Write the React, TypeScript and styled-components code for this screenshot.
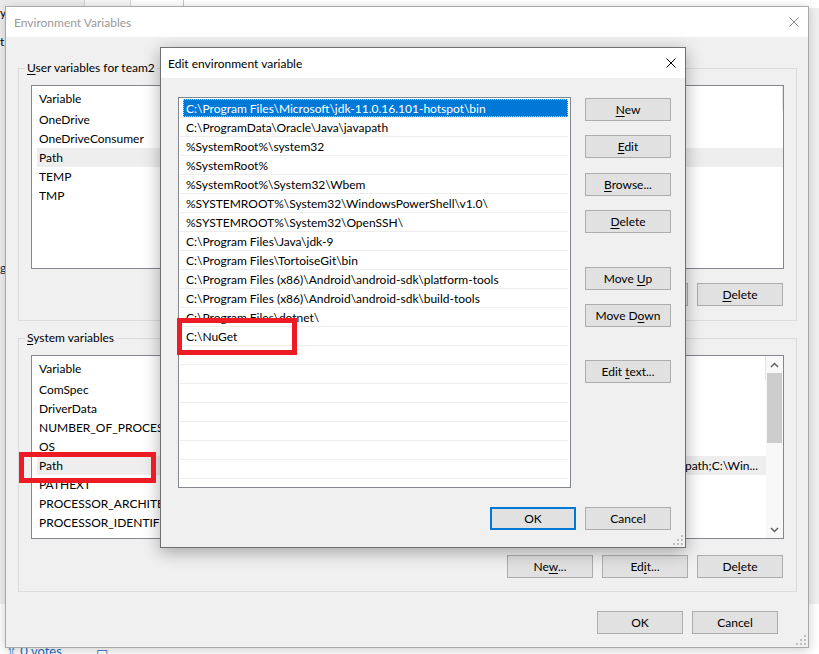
import React from "react";
import styled, { createGlobalStyle } from "styled-components";

const FONT = `"Segoe UI", Lato, "Noto Sans", "Liberation Sans", Arial, sans-serif`;

const GlobalStyle = createGlobalStyle`
  html, body { margin: 0; padding: 0; background: #f0f0f0; }
  body { font-family: ${FONT}; font-size: 12px; color: #000; }
  * { box-sizing: border-box; }
  u { text-decoration-thickness: 1px; text-underline-offset: 2px; }
`;

/* ---------- desktop & background page ---------- */

const Desktop = styled.div`
  position: relative;
  width: 819px;
  height: 654px;
  overflow: hidden;
  background: #f0f0f0;
`;

const TopStrip = styled.div`
  position: absolute;
  left: 0;
  top: 0;
  width: 819px;
  height: 8px;
  background: linear-gradient(
    to right,
    #ececec 0 84px,
    #d0d0d0 84px 85px,
    #f6f6f6 85px 130px,
    #d6d6d6 130px 131px,
    #ffffff 131px 183px,
    #c4c4c4 183px 184px,
    #ffffff 184px
  );
`;

const BottomStrip = styled.div`
  position: absolute;
  left: 0;
  top: 604px;
  width: 819px;
  height: 50px;
  background: #ffffff;
`;

const EdgeGlyph = styled.span<{ $top: number; $color?: string }>`
  position: absolute;
  left: 0;
  top: ${(p) => p.$top}px;
  font-size: 12px;
  line-height: 16px;
  color: ${(p) => p.$color ?? "#000"};
`;

const VotesLine = styled.div`
  position: absolute;
  left: 6px;
  top: 643px;
  display: flex;
  align-items: center;
  gap: 34px;
  font-size: 13px;
  line-height: 16px;
  color: #1a6fc4;
`;

/* ---------- windows ---------- */

const Window = styled.div<{ $x: number; $y: number; $w: number; $h: number; $active?: boolean }>`
  position: absolute;
  left: ${(p) => p.$x}px;
  top: ${(p) => p.$y}px;
  width: ${(p) => p.$w}px;
  height: ${(p) => p.$h}px;
  display: flex;
  flex-direction: column;
  background: #f0f0f0;
  border: 1px solid ${(p) => (p.$active ? "#707070" : "#a9a9a9")};
  box-shadow: ${(p) =>
    p.$active ? "0 4px 16px rgba(0,0,0,0.32)" : "0 2px 10px rgba(0,0,0,0.2)"};
`;

const TitleBar = styled.div<{ $active?: boolean }>`
  flex: none;
  height: 30px;
  display: flex;
  align-items: center;
  justify-content: space-between;
  padding: 0 9px 0 ${(p) => (p.$active ? "7px" : "8px")};
  background: #ffffff;
  color: ${(p) => (p.$active ? "#000" : "#9a9a9a")};
  font-size: 12px;
`;

const CloseIcon = ({ color }: { color: string }) => (
  <svg width="10" height="10" viewBox="0 0 10 10">
    <path d="M0.5 0.5 L9.5 9.5 M9.5 0.5 L0.5 9.5" stroke={color} strokeWidth="1" fill="none" />
  </svg>
);

const Grip = styled.div`
  position: absolute;
  right: 2px;
  bottom: 2px;
  width: 10px;
  height: 10px;
  display: flex;
`;

const GripIcon = () => (
  <svg width="10" height="10" viewBox="0 0 10 10">
    {[
      [8, 0],
      [4, 4],
      [8, 4],
      [0, 8],
      [4, 8],
      [8, 8],
    ].map(([x, y]) => (
      <rect key={`${x}-${y}`} x={x} y={y} width="2" height="2" fill="#bfbfbf" />
    ))}
  </svg>
);

/* ---------- buttons ---------- */

const Button = styled.button<{ $default?: boolean; $mt?: number }>`
  display: block;
  width: 86px;
  height: 23px;
  flex: none;
  margin: ${(p) => p.$mt ?? 0}px 0 0 0;
  padding: 0;
  font-family: ${FONT};
  font-size: 12px;
  line-height: 16px;
  text-align: center;
  white-space: pre;
  color: #000;
  background: #e1e1e1;
  border: ${(p) => (p.$default ? "2px solid #0078d7" : "1px solid #adadad")};
`;

const ButtonRow = styled.div<{ $mt?: number; $pr?: number }>`
  display: flex;
  justify-content: flex-end;
  gap: 9px;
  margin-top: ${(p) => p.$mt ?? 0}px;
  padding-right: ${(p) => p.$pr ?? 0}px;
`;

/* ---------- outer dialog ---------- */

const OuterBody = styled.div`
  flex: 1;
  display: flex;
  flex-direction: column;
  padding: 23px 11px 0 12px;
`;

const Group = styled.fieldset<{ $gap: number; $pb: number; $mt?: number }>`
  margin: ${(p) => p.$mt ?? 0}px 0 0 0;
  min-width: 0;
  padding: 9px 12px ${(p) => p.$pb}px 12px;
  border: 1px solid #dcdcdc;
  display: flex;
  flex-direction: column;
  gap: ${(p) => p.$gap}px;
`;

const Legend = styled.legend`
  margin-left: -6px;
  padding: 0 2px;
  font-size: 12px;
  line-height: 16px;
  color: #000;
`;

const ListView = styled.div`
  height: 184px;
  flex: none;
  display: flex;
  border: 1px solid #828790;
  background: #ffffff;
  overflow: hidden;
`;

const ListMain = styled.div`
  flex: 1;
  min-width: 0;
  display: flex;
  flex-direction: column;
`;

const ListHeader = styled.div`
  flex: none;
  height: 24px;
  display: flex;
  align-items: center;
  padding-left: 7px;
  border-right: 1px solid #e5e5e5;
`;

const VarRow = styled.div<{ $selected?: boolean }>`
  flex: none;
  height: 19px;
  margin-left: 5px;
  display: flex;
  align-items: center;
  background: ${(p) => (p.$selected ? "#eeeeee" : "transparent")};
`;

const NameCell = styled.span`
  width: 170px;
  flex: none;
  padding-left: 2px;
  white-space: nowrap;
  overflow: hidden;
`;

const ValueCell = styled.span`
  flex: 1;
  min-width: 0;
  display: flex;
  justify-content: flex-end;
  padding-right: 8px;
  white-space: nowrap;
  overflow: hidden;
`;

const VScroll = styled.div`
  width: 17px;
  flex: none;
  display: flex;
  flex-direction: column;
  background: #f8f8f8;
`;

const ScrollArrow = styled.div`
  height: 17px;
  flex: none;
  display: flex;
  align-items: center;
  justify-content: center;
`;

const ScrollThumb = styled.div`
  flex: none;
  height: 70px;
  margin: 0 1px;
  background: #cdcdcd;
`;

const ScrollTrack = styled.div`
  flex: 1;
`;

const Chevron = ({ up }: { up?: boolean }) => (
  <svg width="9" height="6" viewBox="0 0 9 6">
    <path
      d={up ? "M1 5 L4.5 1.5 L8 5" : "M1 1 L4.5 4.5 L8 1"}
      stroke="#606060"
      strokeWidth="1.5"
      fill="none"
    />
  </svg>
);

/* ---------- edit dialog ---------- */

const DialogBody = styled.div`
  flex: 1;
  display: flex;
  flex-direction: column;
  padding: 19px 14px 17px 17px;
`;

const DialogMain = styled.div`
  display: flex;
  gap: 14px;
`;

const PathList = styled.div`
  width: 393px;
  height: 391px;
  flex: none;
  border: 1px solid #828790;
  background: #ffffff;
  padding: 1px 2px 0 1px;
  overflow: hidden;
`;

const PathRow = styled.div`
  height: 19px;
  display: flex;
  padding-left: 3px;
  border-bottom: 1px solid #ededed;
`;

const PathText = styled.div<{ $selected?: boolean }>`
  flex: 1;
  display: flex;
  align-items: center;
  padding-left: 3px;
  white-space: nowrap;
  overflow: hidden;
  background: ${(p) => (p.$selected ? "#0078d7" : "transparent")};
  color: ${(p) => (p.$selected ? "#ffffff" : "#000")};
  outline: ${(p) => (p.$selected ? "1px dotted rgba(255,255,255,0.75)" : "none")};
  outline-offset: -1px;
`;

const SideButtons = styled.div`
  width: 86px;
  flex: none;
  display: flex;
  flex-direction: column;
`;

const Highlight = styled.div<{ $x: number; $y: number; $w: number; $h: number }>`
  position: absolute;
  left: ${(p) => p.$x}px;
  top: ${(p) => p.$y}px;
  width: ${(p) => p.$w}px;
  height: ${(p) => p.$h}px;
  border: 5px solid #ed1c24;
  pointer-events: none;
`;

/* ---------- data ---------- */

type Var = { name: string; value?: string; selected?: boolean };

const userVars: Var[] = [
  { name: "OneDrive" },
  { name: "OneDriveConsumer" },
  { name: "Path", selected: true },
  { name: "TEMP" },
  { name: "TMP" },
];

const systemVars: Var[] = [
  { name: "ComSpec" },
  { name: "DriverData" },
  { name: "NUMBER_OF_PROCESSORS" },
  { name: "OS" },
  {
    name: "Path",
    value:
      "C:\\Program Files\\Microsoft\\jdk-11.0.16.101-hotspot\\bin;C:\\ProgramData\\Oracle\\Java\\javapath;C:\\Win...",
    selected: true,
  },
  { name: "PATHEXT" },
  { name: "PROCESSOR_ARCHITECTURE" },
  { name: "PROCESSOR_IDENTIFIER" },
];

const paths = [
  "C:\\Program Files\\Microsoft\\jdk-11.0.16.101-hotspot\\bin",
  "C:\\ProgramData\\Oracle\\Java\\javapath",
  "%SystemRoot%\\system32",
  "%SystemRoot%",
  "%SystemRoot%\\System32\\Wbem",
  "%SYSTEMROOT%\\System32\\WindowsPowerShell\\v1.0\\",
  "%SYSTEMROOT%\\System32\\OpenSSH\\",
  "C:\\Program Files\\Java\\jdk-9",
  "C:\\Program Files\\TortoiseGit\\bin",
  "C:\\Program Files (x86)\\Android\\android-sdk\\platform-tools",
  "C:\\Program Files (x86)\\Android\\android-sdk\\build-tools",
  "C:\\Program Files\\dotnet\\",
  "C:\\NuGet",
];

const pathRows = [...paths, ...Array.from({ length: 8 }, () => "")];

const VarList = ({ vars, scroll }: { vars: Var[]; scroll?: boolean }) => (
  <ListView>
    <ListMain>
      <ListHeader>Variable</ListHeader>
      {vars.map((v) => (
        <VarRow key={v.name} $selected={v.selected}>
          <NameCell>{v.name}</NameCell>
          <ValueCell>{v.value ?? ""}</ValueCell>
        </VarRow>
      ))}
    </ListMain>
    {scroll && (
      <VScroll>
        <ScrollArrow>
          <Chevron up />
        </ScrollArrow>
        <ScrollThumb />
        <ScrollTrack />
        <ScrollArrow>
          <Chevron />
        </ScrollArrow>
      </VScroll>
    )}
  </ListView>
);

export default function App() {
  return (
    <>
      <GlobalStyle />
      <Desktop>
        <TopStrip />
        <BottomStrip />
        <EdgeGlyph $top={5}>y</EdgeGlyph>
        <EdgeGlyph $top={34}>t</EdgeGlyph>
        <EdgeGlyph $top={260} $color="#1b2f4f">g</EdgeGlyph>
        <VotesLine>
          <span>⇧ 0 votes</span>
          <span>▭</span>
        </VotesLine>

        <Window $x={5} $y={6} $w={804} $h={642}>
          <TitleBar>
            <span>Environment Variables</span>
            <CloseIcon color="#8a8a8a" />
          </TitleBar>
          <OuterBody>
            <Group $gap={14} $pb={14}>
              <Legend>
                <u>U</u>ser variables for team2
              </Legend>
              <VarList vars={userVars} />
              <ButtonRow $pr={1}>
                <Button>
                  <u>N</u>ew...
                </Button>
                <Button>
                  <u>E</u>dit...
                </Button>
                <Button>
                  <u>D</u>elete
                </Button>
              </ButtonRow>
            </Group>
            <Group $gap={16} $pb={13} $mt={9}>
              <Legend>
                <u>S</u>ystem variables
              </Legend>
              <VarList vars={systemVars} scroll />
              <ButtonRow $pr={1}>
                <Button>
                  Ne<u>w</u>...
                </Button>
                <Button>
                  Ed<u>i</u>t...
                </Button>
                <Button>
                  De<u>l</u>ete
                </Button>
              </ButtonRow>
            </Group>
            <ButtonRow $mt={19} $pr={19}>
              <Button>OK</Button>
              <Button>Cancel</Button>
            </ButtonRow>
          </OuterBody>
          <Grip>
            <GripIcon />
          </Grip>
        </Window>

        <Window $x={160} $y={47} $w={526} $h={501} $active>
          <TitleBar $active>
            <span>Edit environment variable</span>
            <CloseIcon color="#000000" />
          </TitleBar>
          <DialogBody>
            <DialogMain>
              <PathList>
                {pathRows.map((p, i) => (
                  <PathRow key={i}>
                    <PathText $selected={i === 0}>{p}</PathText>
                  </PathRow>
                ))}
              </PathList>
              <SideButtons>
                <Button $mt={1}>
                  <u>N</u>ew
                </Button>
                <Button $mt={14}>
                  <u>E</u>dit
                </Button>
                <Button $mt={15}>
                  <u>B</u>rowse...
                </Button>
                <Button $mt={14}>
                  <u>D</u>elete
                </Button>
                <Button $mt={34}>
                  {"Move "}
                  <u>U</u>p
                </Button>
                <Button $mt={14}>
                  Move D<u>o</u>wn
                </Button>
                <Button $mt={33}>
                  {"Edit "}
                  <u>t</u>ext...
                </Button>
              </SideButtons>
            </DialogMain>
            <ButtonRow $mt={19}>
              <Button $default>OK</Button>
              <Button>Cancel</Button>
            </ButtonRow>
          </DialogBody>
          <Grip>
            <GripIcon />
          </Grip>
        </Window>

        <Highlight $x={19} $y={452} $w={137} $h={31} />
        <Highlight $x={177} $y={318} $w={120} $h={37} />
      </Desktop>
    </>
  );
}
